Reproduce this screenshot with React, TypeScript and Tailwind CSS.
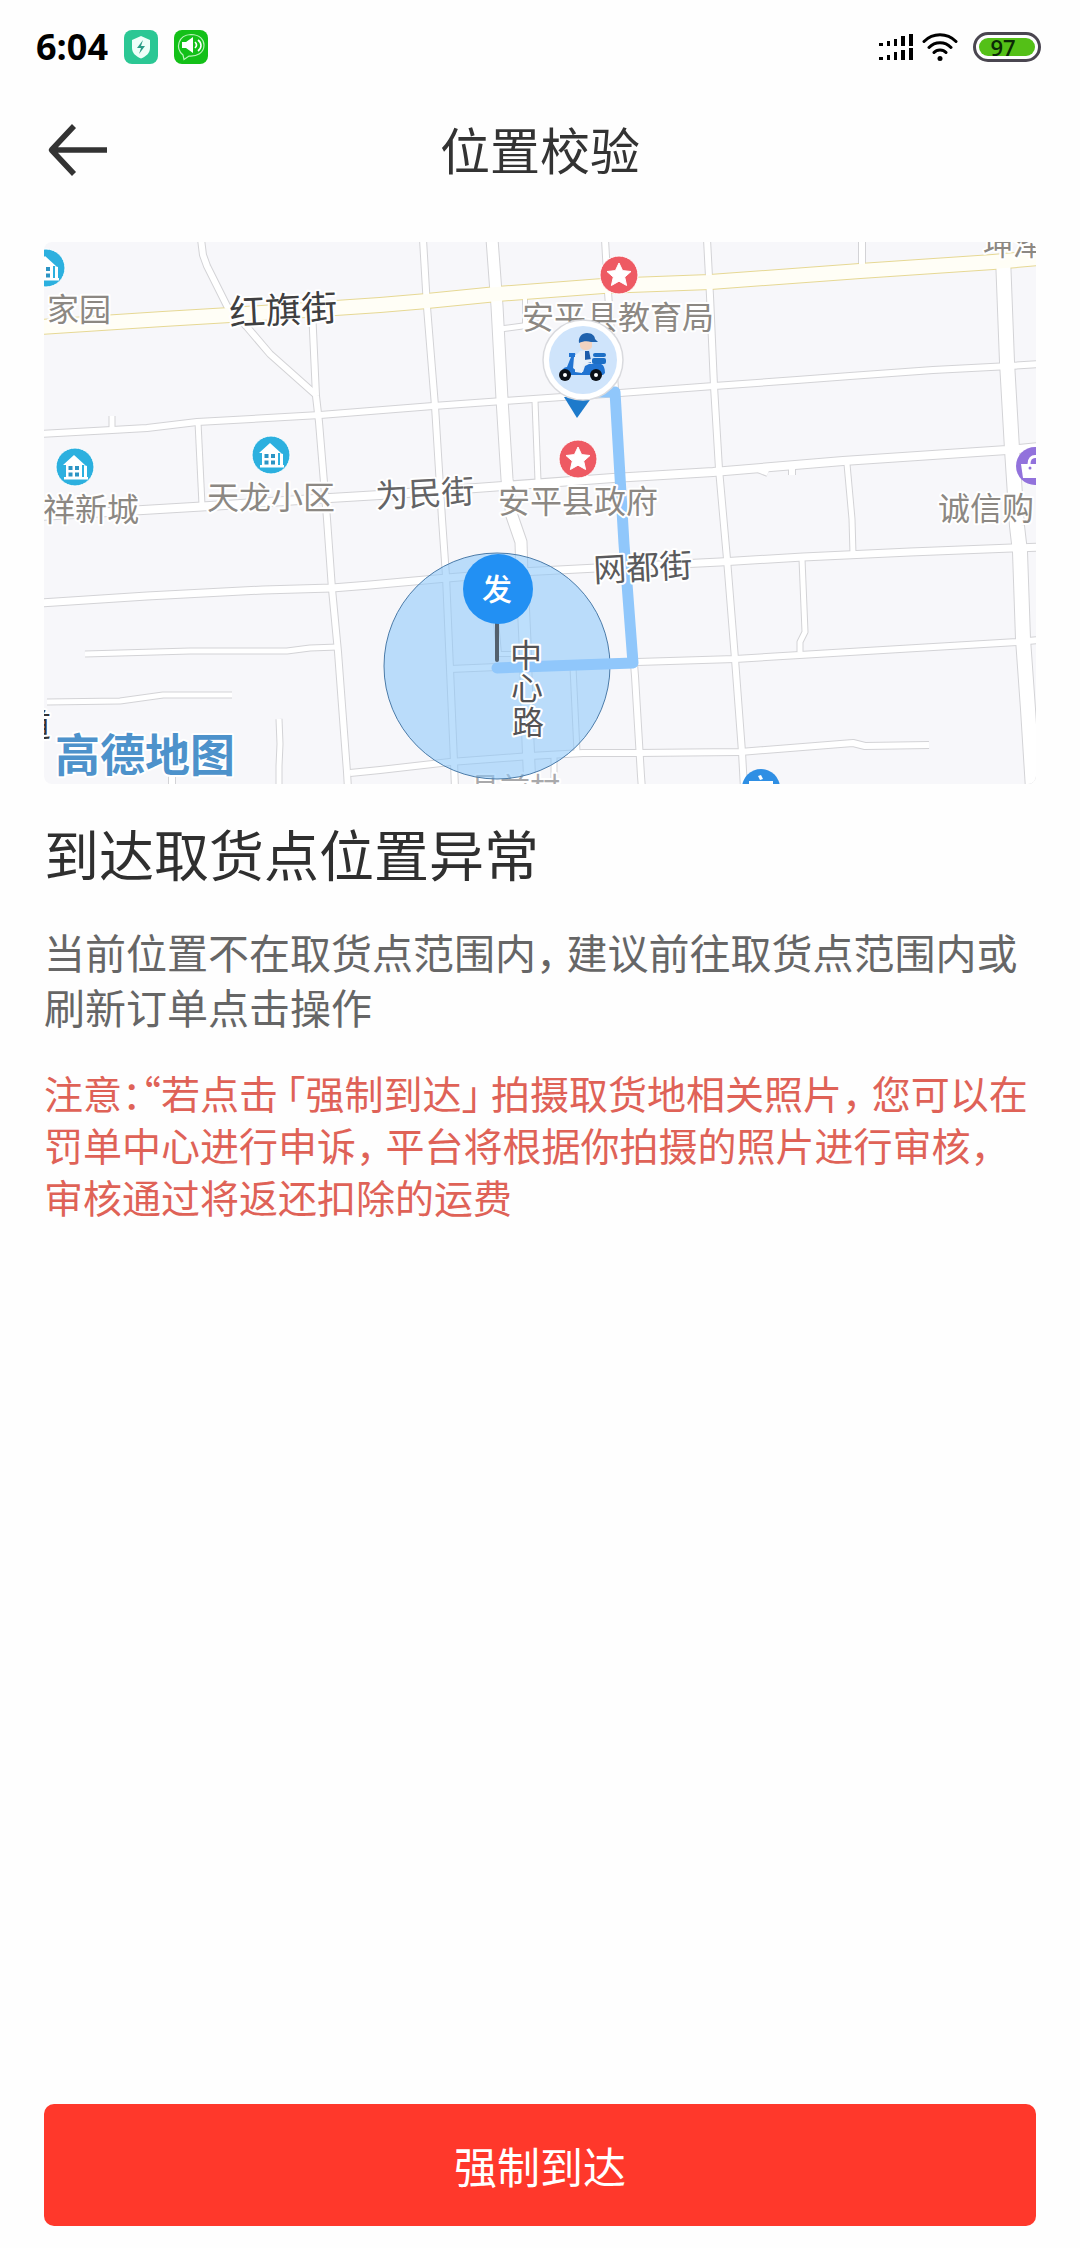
import type { ReactNode } from "react";

type Road = { d: string; w: number };

const ROADS: Road[] = [
  { d: "M201 240L203 256L207 267L227 307L247 328L270 355L315 395", w: 6 },
  { d: "M312 310L316 397L319 423L327 520L332 590L338 653L347 773L348 790", w: 6 },
  { d: "M40 435L112 431L147 429L197 423L320 416L433 407L503 402L620 394L714 387L797 381L850 377L933 371L1010 367L1040 365", w: 6 },
  { d: "M112 417V430", w: 5 },
  { d: "M198 423L202 506", w: 5 },
  { d: "M40 517L143 511L210 507L330 499L380 496L503 487L613 479L713 473L843 462L1007 451L1040 448", w: 8 },
  { d: "M423 240L427 308L435 407L442 520L446 577L450 670L454 763L455 790", w: 6 },
  { d: "M605 240L608 293L615 390L625 553L635 677L641 777L642 790", w: 6 },
  { d: "M707 240L710 297L714 387L719 470L727 560L735 660L742 753L744 790", w: 6 },
  { d: "M525 298V327", w: 4 },
  { d: "M500 330L545 324", w: 5 },
  { d: "M535 402L538 482", w: 5 },
  { d: "M862 240V268", w: 6 },
  { d: "M847 465L852 520L853 555", w: 5 },
  { d: "M758 470L768 474M792 464V476", w: 6 },
  { d: "M40 604L147 597L263 591L332 589L370 586L447 579L520 573L597 569L720 563L803 558L910 553L1040 548", w: 7 },
  { d: "M802 560L805 633L800 643V653", w: 5 },
  { d: "M450 670L497 668L637 663L735 660L833 654L1017 643L1040 641", w: 6 },
  { d: "M85 655L190 652L287 652L310 649L338 648", w: 5 },
  { d: "M47 703L120 702L163 696L232 696", w: 5 },
  { d: "M279 720L280 745L279 767V790", w: 5 },
  { d: "M172 775V790", w: 6 },
  { d: "M350 774L380 771L450 763L530 757L583 754L637 754L740 753L853 744L865 747L929 746", w: 6 },
  { d: "M573 668L577 753", w: 5 },
  { d: "M496 622L499 655L517 655", w: 4 },
  { d: "M554 756V790", w: 5 },
  { d: "M492 240L497 307L502 400L507 480L512 517L521 543L522 577L525 643L528 743L530 790", w: 11 },
  { d: "M1003 258L1007 363L1012 450L1017 527L1020 553L1023 640L1028 710L1033 790", w: 14 },
];

const MAIN_ROAD =
  "M40 328L163 320L230 316L380 306L427 302L497 295L603 287L710 283L860 272L993 263L1040 259";

function Star({ x, y }: { x: number; y: number }) {
  return (
    <g transform={`translate(${x} ${y})`}>
      <circle r="19" fill="#ee5a63" stroke="#fff" strokeWidth="1" />
      <path
        d="M0 -12L3.6 -4.4L12 -3.5L5.7 2.1L7.6 10.5L0 6.2L-7.6 10.5L-5.7 2.1L-12 -3.5L-3.6 -4.4Z"
        fill="#fff"
        stroke="#fff"
        strokeWidth="1"
        strokeLinejoin="round"
      />
    </g>
  );
}

function Home({ x, y }: { x: number; y: number }) {
  return (
    <g transform={`translate(${x} ${y})`}>
      <circle r="19" fill="#2cb0df" stroke="#fff" strokeWidth="1" />
      <path d="M-12 -2L-1 -12L10 -2H7V10H9V-2L12 -1V10H13V12.5H-11V10H-9V-2Z" fill="#fff" />
      <path d="M-6.5 -1h4v4h-4zM0 -1h4v4h-4zM-6.5 5.5h4v4h-4zM0 5.5h4v4h-4z" fill="#2c94c4" />
    </g>
  );
}

function Scooter() {
  return (
    <g transform="translate(583 361)">
      <circle r="40" fill="#fff" stroke="#d9dade" strokeWidth="1.5" />
      <circle r="34" fill="#cfe4fb" />
      <path d="M-10 -1L-3 -9L4 -10L8 -3L6 6L-2 13H-9Z" fill="#e6eef7" />
      <path d="M2 -9h4l2 9v3h-6z" fill="#1c5cab" />
      <path d="M-3 -19H9V-14C9 -9 -2 -8 -3 -14Z" fill="#f3d3c0" />
      <path d="M-4 -17c-1-6 3-10 8-10s8 3 8 6l3 3h-7c-3-1-8-1-12 1z" fill="#1f62ae" />
      <rect x="10" y="-7" width="13" height="4" rx="2" fill="#1d6fc6" />
      <rect x="9" y="-2" width="14" height="6" rx="2" fill="#1d6fc6" />
      <path d="M-14 -7h6l1 4h-2l-1 11l5 4h5l2-6l4-2h12c3 1 4 5 4 9l-2 2H-22c0-5 3-8 6-8l4-10h-2z" fill="#2174d2" />
      <path d="M-8 -5L-4 -7L1 0L9 -1V2L0 4L-1 13L-8 12Z" fill="#e9f1fa" />
      <circle cx="-18" cy="15" r="6" fill="#0b0f16" />
      <circle cx="-18" cy="15" r="2" fill="#fff" />
      <circle cx="13" cy="15" r="6" fill="#0b0f16" />
      <circle cx="13" cy="15" r="2" fill="#fff" />
    </g>
  );
}

type LabelProps = {
  x: number;
  y: number;
  children: string;
  tone?: string;
  size?: number;
  turn?: number;
  weight?: number;
};

function Label({ x, y, children, tone = "#8c8883", size = 32, turn = 0, weight = 400 }: LabelProps) {
  return (
    <text
      x={x}
      y={y}
      fontSize={size}
      fontWeight={weight}
      fill={tone}
      stroke="#fff"
      strokeWidth="4"
      strokeLinejoin="round"
      paintOrder="stroke"
      transform={`rotate(${turn} ${x} ${y})`}
    >
      {children}
    </text>
  );
}

function RouteMap() {
  return (
    <svg viewBox="44 243 992 542" role="img" aria-label="地图" className="mt-9 block w-full rounded-lg bg-[#f7f7fa]">
      <g fill="none" strokeLinejoin="round">
        {ROADS.map((r) => (
          <path key={r.d} d={r.d} stroke="#d3d3d6" strokeWidth={r.w + 2} />
        ))}
        <path d={MAIN_ROAD} stroke="#e6d894" strokeWidth="16" />
        {ROADS.map((r) => (
          <path key={r.d} d={r.d} stroke="#fff" strokeWidth={r.w} />
        ))}
        <path d={MAIN_ROAD} stroke="#fffef6" strokeWidth="14" />
      </g>

      <Label x={470} y={800} size={30} tone="#a9a9ab">县前村</Label>
      <circle cx="497" cy="667" r="113" fill="#8ec8fa" fillOpacity="0.58" stroke="#4b7ba8" strokeWidth="1" />
      <path
        d="M598 393H615L624 545L633 664L497 669"
        fill="none"
        stroke="#90c7fb"
        strokeWidth="11"
        strokeLinejoin="round"
        strokeLinecap="round"
      />

      <Home x={46} y={269} />
      <Home x={75} y={468} />
      <Home x={271} y={456} />
      <Star x={619} y={276} />
      <Star x={578} y={460} />
      <g transform="translate(1035 467)">
        <circle r="19" fill="#9272dc" />
        <path d="M-14 -2H14L12 12H-12Z" fill="#fff" />
        <path d="M-6 -2C-6 -12 6 -12 6 -2" fill="none" stroke="#fff" strokeWidth="3" />
        <circle cx="-5" cy="2" r="1.5" fill="#9272dc" />
      </g>
      <g transform="translate(761 789)">
        <circle r="19" fill="#2f8fe4" />
        <path d="M-12 -7H12V4H-12ZM-3 -12L0 -13L2 -9L-1 -8Z" fill="#fff" />
      </g>

      <Label x={47} y={322}>家园</Label>
      <Label x={43} y={522}>祥新城</Label>
      <Label x={207} y={510}>天龙小区</Label>
      <Label x={522} y={330}>安平县教育局</Label>
      <Label x={498} y={514}>安平县政府</Label>
      <Label x={938} y={521}>诚信购</Label>
      <Label x={983} y={256} size={30}>坤泽</Label>
      <Label x={230} y={327} size={36} tone="#3f3f41" turn={-3}>红旗街</Label>
      <Label x={376} y={509} size={33} tone="#646466" turn={-3}>为民街</Label>
      <Label x={594} y={583} size={33} tone="#5a5a5c" turn={-3}>网都街</Label>
      <Label x={510} y={668} tone="#545456">中</Label>
      <Label x={511} y={701} tone="#545456">心</Label>
      <Label x={512} y={735} tone="#545456">路</Label>
      <Label x={19} y={738} tone="#333335">道</Label>
      <Label x={55} y={773} size={45} tone="#4d92cb" weight={700}>高德地图</Label>

      <path d="M497 622V661" stroke="#53606d" strokeWidth="4" strokeLinecap="round" />
      <circle cx="498" cy="590" r="35" fill="#2290f3" />
      <text x="497" y="601" fontSize="30" fontWeight="500" textAnchor="middle" fill="#fff">发</text>
      <path d="M564 398H592L577 419Z" fill="#1d7acb" />
      <Scooter />
    </svg>
  );
}

function StatusBar() {
  return (
    <div className="flex h-[94px] items-center justify-between pr-[39px] pl-9">
      <div className="flex items-center">
        <time className="font-['Open_Sans',sans-serif] text-[36px] leading-none font-bold text-black">6:04</time>
        <svg viewBox="0 0 34 34" className="ml-4 size-[34px]" aria-hidden="true">
          <rect width="34" height="34" rx="8" fill="#2bc794" />
          <path d="M17 6L26 10V18C26 23 22 26.5 17 28.5C12 26.5 8 23 8 18V10Z" fill="#effff9" />
          <path d="M19 10L13 18H17L15 24L21 16H17Z" fill="#2a9c86" />
        </svg>
        <svg viewBox="0 0 34 34" className="ml-4 size-[34px]" aria-hidden="true">
          <rect width="34" height="34" rx="8" fill="#13c018" />
          <path
            d="M9 25C1 18 4 5 17 4.5C26 4.5 30 10 30 15C30 23 23 26.5 15 26L10 29.5Z"
            fill="none"
            stroke="#b9f3ba"
            strokeWidth="1.2"
          />
          <path d="M8 12H12L19 7V23L12 18H8Z" fill="#fff" />
          <path d="M21 12C23 14 23 16 21 18M24 10C28 13 28 18 24 21" fill="none" stroke="#fff" strokeWidth="1.6" />
        </svg>
      </div>
      <div className="flex items-center">
        <svg viewBox="0 0 34 27" className="h-[27px] w-[34px]" aria-hidden="true">
          <path
            d="M0 9h4v3H0zM8 7h3v5H8zM15 5h3v7h-3zM22 2h4v10h-4zM30 0h4v12h-4zM0 23h4v3H0zM8 21h3v5H8zM15 18h3v8h-3zM22 16h4v10h-4zM30 14h4v12h-4z"
            fill="#000"
          />
        </svg>
        <svg viewBox="0 0 36 28" className="ml-[9px] h-7 w-9" aria-hidden="true">
          <path
            d="M2 8.5C11 -0.5 25 -0.5 34 8.5M7 14.5C13 8 23 8 29 14.5M12 19.5C15 16 21 16 24 19.5"
            fill="none"
            stroke="#000"
            strokeWidth="3"
            strokeLinecap="round"
          />
          <circle cx="18" cy="25.5" r="2.5" fill="#000" />
        </svg>
        <div className="ml-[15px] flex h-[30px] w-[68px] rounded-full border-3 border-[#4a4650] p-[3px]">
          <span className="flex flex-1 items-center justify-center rounded-full bg-[#54c017] pr-2 font-['Open_Sans',sans-serif] text-[22px] leading-none font-semibold text-[#0b2a06]">
            97
          </span>
        </div>
      </div>
    </div>
  );
}

/** Half-width comma with the side spacing of the running text. */
function Comma() {
  return <span className="mr-2.5 [font-feature-settings:'halt']">，</span>;
}

function Quoted({ children }: { children: ReactNode }) {
  return (
    <>
      <span className="ml-2 [font-feature-settings:'halt']">「</span>
      {children}
      <span className="mr-2.5 [font-feature-settings:'halt']">」</span>
    </>
  );
}

export default function App() {
  return (
    <div className="flex min-h-screen flex-col bg-[#fefefe] font-['Noto_Sans_CJK_SC',sans-serif]" lang="zh-CN">
      <StatusBar />
      <header className="grid h-28 grid-cols-[1fr_auto_1fr] items-center px-11">
        <button type="button" aria-label="返回" className="justify-self-start">
          <svg viewBox="0 0 68 56" className="h-14 w-[68px]" fill="none" stroke="#333" strokeWidth="5.5" aria-hidden="true">
            <path d="M30 4L7.5 28L30 52M8 28H63" strokeLinejoin="round" />
          </svg>
        </button>
        <h1 className="pb-1 text-[50px] leading-[72px] text-[#333]">位置校验</h1>
      </header>

      <main className="flex flex-1 flex-col px-11 pb-[22px]">
        <RouteMap />
        <h2 className="mt-8 text-[55px] leading-[72px] text-[#2f2f2f]">到达取货点位置异常</h2>
        <p className="mt-9 text-[41px] leading-[55px] text-[#666]">
          当前位置不在取货点范围内
          <Comma />
          建议前往取货点范围内或刷新订单点击操作
        </p>
        <p className="mt-8 text-[39px] leading-[52px] text-[#df6257]">
          注意
          <span className="[font-feature-settings:'halt']">：“</span>
          若点击<Quoted>强制到达</Quoted>拍摄取货地相关照片
          <Comma />
          您可以在罚单中心进行申诉
          <Comma />
          平台将根据你拍摄的照片进行审核
          <Comma />
          审核通过将返还扣除的运费
        </p>
        <button type="button" className="mt-auto h-[122px] w-full rounded-[10px] bg-[#ff382b] text-[43px] text-white">
          强制到达
        </button>
      </main>
    </div>
  );
}
